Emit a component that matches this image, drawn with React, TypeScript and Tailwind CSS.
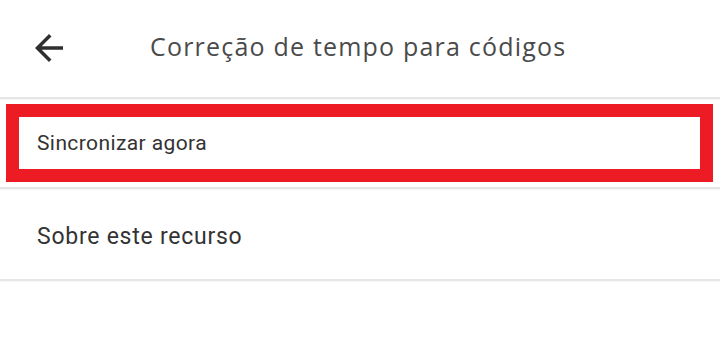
import React from 'react';

function BackArrow() {
  return (
    <svg width="42" height="42" viewBox="0 0 24 24" className="shrink-0">
      <path
        d="M20 11H7.83l5.59-5.59L12 4l-8 8 8 8 1.41-1.41L7.83 13H20v-2z"
        fill="#2f2f2f"
      />
    </svg>
  );
}

function Divider() {
  return <div className="h-[2px] bg-[#e6e6e6] shadow-[0_1px_1px_rgba(0,0,0,0.04)]" />;
}

export default function App() {
  return (
    <div className="w-[720px] h-[337px] bg-white overflow-hidden">
      <header className="h-[97px] flex items-center">
        <div className="ml-[28px] mt-[-2px]">
          <BackArrow />
        </div>
        <h1
          className="ml-[80px] mt-[-4px] text-[25px] text-[#4a4a4a] tracking-[1.2px]"
          style={{ fontFamily: '"Open Sans", sans-serif' }}
        >
          Correção de tempo para códigos
        </h1>
      </header>
      <Divider />

      <div className="relative h-[88px] flex items-center pl-[37px]">
        <span
          className="pt-[2px] text-[21px] text-[#333333] tracking-[0.4px]"
          style={{ fontFamily: 'Roboto, sans-serif' }}
        >
          Sincronizar agora
        </span>
        <div className="absolute left-[6px] top-[5px] w-[707px] h-[78px] border-[13px] border-[#ed1c24]" />
      </div>
      <Divider />

      <div className="h-[90px] flex items-center pl-[37px]">
        <span
          className="pt-[7px] text-[23px] text-[#333333] tracking-[0.75px]"
          style={{ fontFamily: 'Roboto, sans-serif' }}
        >
          Sobre este recurso
        </span>
      </div>
      <Divider />
    </div>
  );
}
